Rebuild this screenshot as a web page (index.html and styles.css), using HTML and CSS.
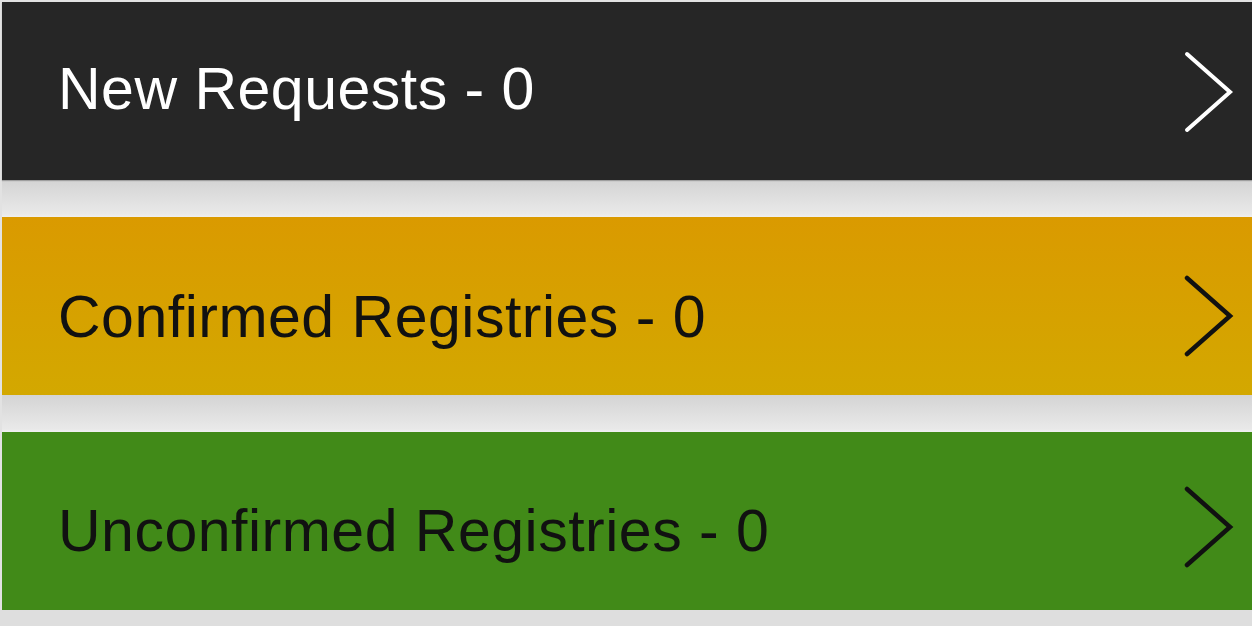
FILE: index.html
```html
<!DOCTYPE html>
<html>
<head>
<meta charset="utf-8">
<link rel="stylesheet" href="styles.css">
</head>
<body>
<ul class="menu">
  <li class="cell">
    <a class="row row-dark">
      <span class="label">New Requests - 0</span>
      <svg class="chev" viewBox="0 0 50 82"><polyline points="3,3 46,41 3,79"/></svg>
    </a>
  </li>
  <li class="cell">
    <a class="row row-orange">
      <span class="label">Confirmed Registries - 0</span>
      <svg class="chev" viewBox="0 0 50 82"><polyline points="3,3 46,41 3,79"/></svg>
    </a>
  </li>
  <li class="cell">
    <a class="row row-green">
      <span class="label">Unconfirmed Registries - 0</span>
      <svg class="chev" viewBox="0 0 50 82"><polyline points="3,3 46,41 3,79"/></svg>
    </a>
  </li>
</ul>
</body>
</html>
```
FILE: styles.css
```css
html, body {
  margin: 0;
  padding: 0;
  background: #dedede;
  overflow: hidden;
}
body {
  width: 1252px;
  height: 626px;
  font-family: "Liberation Sans", Arial, sans-serif;
}
.menu {
  list-style: none;
  margin: 0;
  padding: 2px 0 0 2px;
  background: #e2e2e2;
}
.cell {
  padding-bottom: 37px;
  background: linear-gradient(to bottom, #d4d4d4 0, #d4d4d4 178px, #e9e9e9 212px, #f0f0f0 215px);
}
.cell:last-child {
  padding-bottom: 0;
}
.row {
  display: flex;
  align-items: flex-start;
  justify-content: space-between;
  height: 178px;
  box-sizing: border-box;
  padding: 0 18px 0 56px;
}
.label {
  font-size: 59px;
  line-height: 59px;
  letter-spacing: 0.5px;
  padding-top: 58px;
  white-space: nowrap;
}
.chev {
  width: 50px;
  height: 82px;
  margin-top: 49px;
  fill: none;
  stroke-width: 4.5;
  stroke-linecap: round;
  stroke-linejoin: miter;
}
.row-dark {
  background: #262626;
  color: #ffffff;
  box-shadow: 0 1px 1px rgba(0,0,0,0.25);
}
.row-dark .chev { stroke: #ffffff; stroke-width: 4; }
.row-orange {
  background: linear-gradient(to bottom, #da9a00, #d3a800);
  color: #111111;
}
.row-orange .label { padding-top: 71px; }
.row-orange .chev { stroke: #111111; margin-top: 58px; }
.row-green {
  background: #418a18;
  color: #111111;
}
.row-green .label { padding-top: 70px; }
.row-green .chev { stroke: #111111; margin-top: 54px; }
```
